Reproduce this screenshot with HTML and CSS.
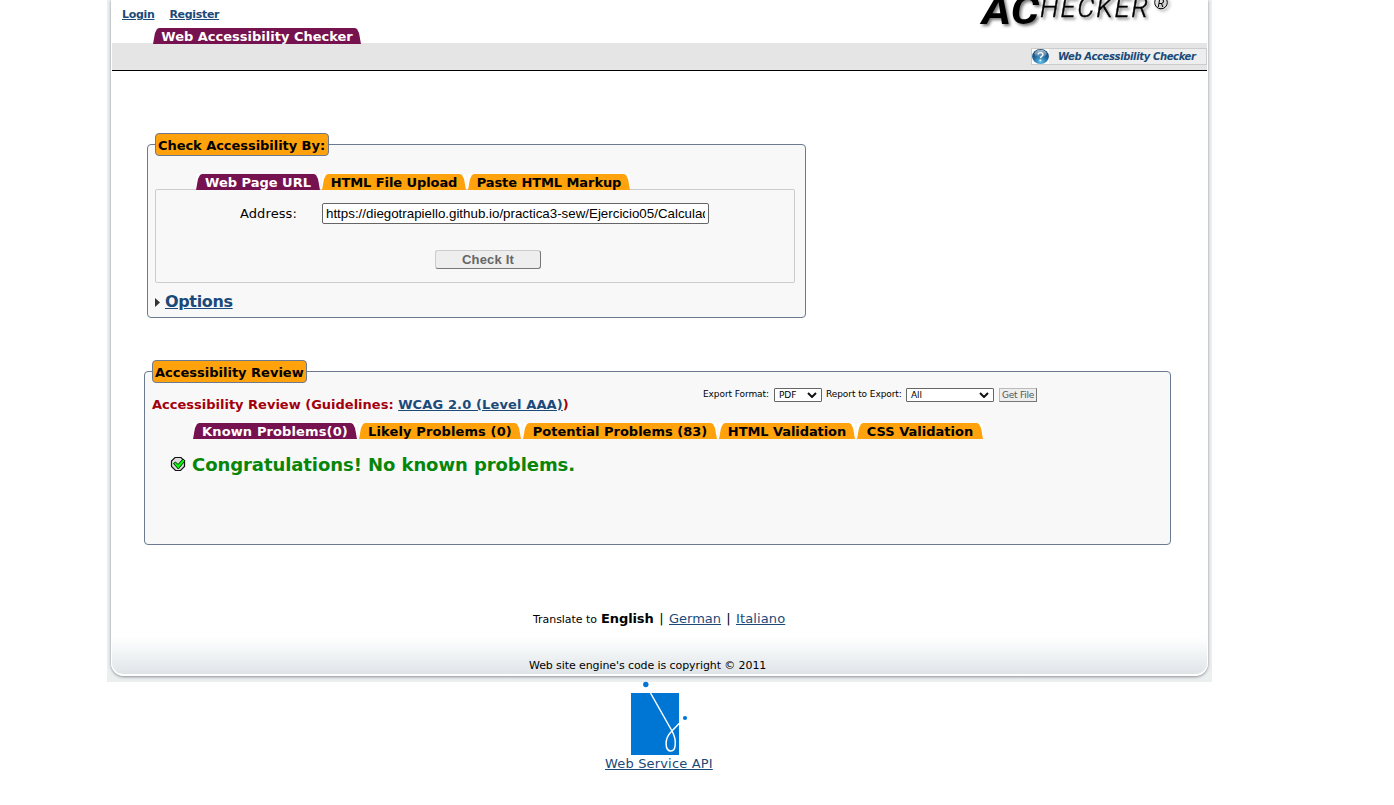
FILE: index.html
```html
<!DOCTYPE html>
<html lang="en">
<head>
<meta charset="utf-8">
<title>Web Accessibility Checker</title>
<link rel="stylesheet" href="styles.css">
</head>
<body>
<div class="frame">
<div class="sheet">
  <header class="header">
    <div class="header-left">
      <nav class="account"><a href="#">Login</a><a href="#">Register</a></nav>
      <ul class="tabs top-tabs"><li class="tab active w208"><span>Web Accessibility Checker</span></li></ul>
    </div>
    <svg class="logo" width="200" height="32" viewBox="0 0 200 32">
      <g class="logo-text">
        <text class="logo-ac" x="4" y="24" textLength="57" lengthAdjust="spacingAndGlyphs">AC</text>
        <text class="logo-rest" x="62" y="17" textLength="108" lengthAdjust="spacing">HECKER</text>
        <g class="logo-mark"><circle cx="183" cy="2.500" r="6.300"/><text class="logo-reg" x="179.500" y="6.500">R</text></g>
      </g>
    </svg>
  </header>
  <div class="band">
    <a class="help" href="#">
      <svg width="17" height="16" viewBox="0 0 18 18" preserveAspectRatio="none">
        <defs><radialGradient id="ball" cx=".5" cy=".85" r=".85"><stop offset="0" stop-color="#62c4ee"/><stop offset=".5" stop-color="#21699f"/><stop offset="1" stop-color="#123e6b"/></radialGradient>
        <linearGradient id="gloss" x2="0" y2="1"><stop offset="0" stop-color="#fff" stop-opacity=".65"/><stop offset="1" stop-color="#fff" stop-opacity=".1"/></linearGradient></defs>
        <rect width="18" height="18" fill="#fff"/>
        <circle cx="9" cy="9" r="8.900" fill="url(#ball)"/>
        <ellipse cx="9" cy="5.500" rx="6.500" ry="4.500" fill="url(#gloss)"/>
        <path d="M6.500 6.700C6.700 3.500 11.800 3.500 11.600 6.800C11.500 8.800 9.200 8.800 9 11" fill="none" stroke="#fff" stroke-width="1.500"/>
        <circle cx="8.800" cy="13.600" r="1.100" fill="#fff"/>
      </svg>
      <span>Web Accessibility Checker</span>
    </a>
  </div>

  <main class="main">
    <section class="panel check">
      <h2 class="legend lg-check"><span>Check Accessibility By:</span></h2>
      <ul class="tabs check-tabs">
        <li class="tab active w124"><span>Web Page URL</span></li>
        <li class="tab w144 tight"><span>HTML File Upload</span></li>
        <li class="tab w162 tight"><span>Paste HTML Markup</span></li>
      </ul>
      <div class="form">
        <div class="field"><label for="url">Address:</label><input id="url" class="url" type="text" value="https://diegotrapiello.github.io/practica3-sew/Ejercicio05/Calculadora.html"></div>
        <button class="submit">Check It</button>
      </div>
      <div class="options"><svg width="6" height="9" viewBox="0 0 6 9"><path d="M0 0L5 4.500L0 9Z" fill="#333"/></svg><a href="#">Options</a></div>
    </section>

    <section class="panel review">
      <h2 class="legend lg-review"><span>Accessibility Review</span></h2>
      <div class="review-head">
        <h3 class="guide"><span>Accessibility Review (Guidelines: </span><a href="#">WCAG 2.0 (Level AAA)</a>)</h3>
        <div class="export">
          <span class="ef">Export Format:</span>
          <span class="select s-pdf">PDF<svg width="10" height="6" viewBox="0 0 10 6"><path d="M1 1L5 5L9 1" fill="none" stroke="#111" stroke-width="2"/></svg></span>
          <span class="re">Report to Export:</span>
          <span class="select s-all">All<svg width="10" height="6" viewBox="0 0 10 6"><path d="M1 1L5 5L9 1" fill="none" stroke="#111" stroke-width="2"/></svg></span>
          <button class="get">Get File</button>
        </div>
      </div>
      <ul class="tabs review-tabs">
        <li class="tab active w164 loose"><span>Known Problems(0)</span></li>
        <li class="tab w162 loose"><span>Likely Problems (0)</span></li>
        <li class="tab w194"><span>Potential Problems (83)</span></li>
        <li class="tab w136 tight"><span>HTML Validation</span></li>
        <li class="tab w126"><span>CSS Validation</span></li>
      </ul>
      <div class="congrats">
        <svg width="17" height="16" viewBox="0 0 17 16">
          <path d="M5 1.500H11L14.500 5V10.500L10.500 14.500H5.500L1.500 10.500V5Z" fill="#ddd" stroke="#111" stroke-width="1.200"/>
          <path d="M3.500 7.500L5.500 6L8 8.500L13 3L15 4.800L8.300 13Z" fill="#0f0" stroke="#020" stroke-width="1"/>
        </svg>
        <span>Congratulations! No known problems.</span>
      </div>
    </section>
  </main>

  <div class="translate"><small>Translate to</small><b>English</b><i>|</i><a href="#" class="de">German</a><i>|</i><a href="#" class="it">Italiano</a></div>
  <footer class="copyright">Web site engine's code is copyright © 2011</footer>
</div>
</div>
<div class="api">
  <svg width="60" height="74" viewBox="0 0 60 74">
    <rect x="2" y="12" width="48" height="62" fill="#0076d4"/>
    <circle cx="16.8" cy="3.5" r="2.7" fill="#0076d4"/><circle cx="56" cy="37" r="2.1" fill="#0076d4"/>
    <path d="M21.500 12L43 50C48 59 47 70 42 70C36 70 35 58 42 51C45 47.500 47 46 50 42.500" fill="none" stroke="#fff" stroke-width="1.500"/>
  </svg>
  <a href="#">Web Service API</a>
</div>
</body>
</html>
```
FILE: styles.css
```css
* { box-sizing: border-box; }
body { margin: 0; background: #fff; color: #000; font: 13px/16px Verdana, "DejaVu Sans", sans-serif; overflow: hidden; height: 805px; }
a { color: #1b4a78; }
h2, h3, ul { margin: 0; padding: 0; font-size: 13px; }
ul { list-style: none; }
svg { display: block; flex: none; }
span, a, b, small, label { white-space: nowrap; }

.frame { width: 1105px; height: 682px; margin-left: 107px; padding: 0 4px 6px; background: #eceff0; }
.sheet { display: flex; flex-direction: column; height: 676px; border: solid #fff; border-width: 0 1px 2px; border-radius: 0 0 13px 13px; background: linear-gradient(#fff 636px, #f2f5f6 652px, #dfe4e8 674px); box-shadow: 0 1px 3px #888e92; clip-path: inset(0 -4px -6px -4px); }

.header { display: flex; justify-content: space-between; height: 43px; }
.header-left { display: flex; flex-direction: column; padding-left: 10px; }
.account { display: flex; gap: 15px; height: 28px; padding-top: 7px; font-size: 11px; font-weight: bold; letter-spacing: -.32px; flex: none; }
.logo { margin-right: 29px; }
.logo-text { filter: drop-shadow(2px 2px 1.500px #777); }
.logo-ac { font: italic bold 40px Roboto, sans-serif; }
.logo-rest { font: italic 300 27px Roboto, sans-serif; stroke: #000; stroke-width: .4; }
.logo-mark circle { fill: none; stroke: #000; }
.logo-reg { font: italic 11px Roboto, sans-serif; }

.tabs { display: flex; gap: 2px; height: 16px; flex: none; }
.tab { position: relative; height: 16px; text-align: center; font-size: 13px; font-weight: bold; line-height: 17px; background: #fff; z-index: 1; }
.tab span { display: block; height: 16px; background: #ffa20c; clip-path: polygon(0 100%, 2px 5px, 4px 1px, 6px 0, calc(100% - 6px) 0, calc(100% - 4px) 1px, calc(100% - 2px) 5px, 100% 100%); }
.tab.active span { background: #76124f; color: #fff; }
.tight { letter-spacing: -.08px; }
.loose { letter-spacing: .12px; }
.top-tabs { padding-left: 31px; }
.w208 { width: 208px; } .w124 { width: 124px; } .w144 { width: 144px; } .w162 { width: 162px; }
.w164 { width: 164px; } .w194 { width: 194px; } .w136 { width: 136px; } .w126 { width: 126px; }

.band { display: flex; justify-content: flex-end; height: 28px; padding-top: 5px; background: #e5e5e5; border-bottom: 1px solid #000; }
.help { display: flex; gap: 9px; width: 176px; height: 17px; border: 1px solid #ccc; background: #eee; font: italic bold 10px/16px "DejaVu Sans", sans-serif; letter-spacing: -.36px; text-decoration: none; }
.help svg { height: 15px; }

.main { display: flex; flex-direction: column; gap: 53px; height: 535px; padding: 73px 0 0 32px; }
.panel { display: flex; flex-direction: column; border: 1px solid #6b7a90; border-radius: 4px; background: #f8f8f8; }
.legend { height: 23px; margin: -12px 0 0 7px; padding-left: 2px; border: 1px solid #6b7a90; border-radius: 4px; background: #ffa20c; line-height: 23px; flex: none; }
.lg-check { width: 174px; letter-spacing: -.05px; } .lg-review { width: 155px; }
.check { width: 659px; height: 174px; margin-left: 3px; }
.check-tabs { padding-left: 48px; margin-top: 18px; }
.form { display: flex; flex-direction: column; width: 640px; height: 94px; margin: -1px 0 0 7px; padding-top: 13px; border: 1px solid #ccc; border-radius: 2px; flex: none; }
.field { display: flex; height: 21px; padding-left: 84px; line-height: 21px; }
.field label { width: 82px; letter-spacing: .1px; }
.url { width: 387px; height: 21px; padding: 1px 3px; border: 1px solid #666; border-radius: 2px; background: #fff; font: 13.330px "Liberation Sans", sans-serif; }
.submit { width: 106px; height: 19px; margin: 26px 0 0 279px; padding: 0; border: 1px solid; border-color: #ccc #777 #777 #ccc; border-radius: 3px; background: #eee; color: #666; font: bold 13px/16px "Liberation Sans", sans-serif; letter-spacing: .2px; }
.options { display: flex; align-items: center; gap: 4px; height: 20px; margin: 9px 0 0 7px; font-size: 16px; font-weight: bold; letter-spacing: -.35px; }

.review { width: 1027px; height: 174px; }
.review-head { display: flex; height: 40px; padding-left: 7px; flex: none; }
.guide { width: 551px; padding-top: 14px; color: #a3000c; white-space: nowrap; }
.guide span { white-space: pre; }
.guide a { letter-spacing: .13px; }
.export { display: flex; align-items: center; height: 14px; margin-top: 5px; font-size: 9px; line-height: 14px; letter-spacing: -.08px; }
.ef { width: 71px; padding-bottom: 2px; } .re { width: 80px; margin-left: 4px; padding-bottom: 2px; }
.select { display: flex; align-items: center; justify-content: space-between; height: 14px; padding: 0 4px; border: 1px solid #666; border-radius: 1px; background: #fff; font-size: 9px; }
.s-pdf { width: 48px; } .s-all { width: 88px; }
.get { width: 38px; height: 14px; margin-left: 5px; padding: 0; border: 1px solid; border-color: #bbb #777 #777 #bbb; background: #eee; color: #555; font: 9px/11px "DejaVu Sans", sans-serif; letter-spacing: -.25px; white-space: nowrap; }
.review-tabs { padding-left: 48px; }
.congrats { display: flex; align-items: center; gap: 5px; height: 24px; margin: 14px 0 0 25px; color: #078507; font-size: 18px; font-weight: bold; letter-spacing: -.07px; }
.congrats svg { margin-top: -2px; }

.translate { display: flex; align-items: baseline; height: 20px; margin: 3px 0 0 421px; line-height: 20px; }
.translate small { width: 68px; font-size: 11px; letter-spacing: -.05px; }
.translate b { width: 53px; letter-spacing: -.1px; }
.translate i { width: 15px; text-align: center; font-style: normal; }
.de { width: 52px; } .it { width: 50px; letter-spacing: .12px; }
.copyright { margin: 29px 0 0 417px; font-size: 11px; letter-spacing: -.09px; white-space: nowrap; }
.api { display: flex; flex-direction: column; width: 110px; margin-left: 605px; line-height: 17px; letter-spacing: .17px; }
.api svg { margin: -1px 0 0 24px; }
.api a { width: max-content; }
```
